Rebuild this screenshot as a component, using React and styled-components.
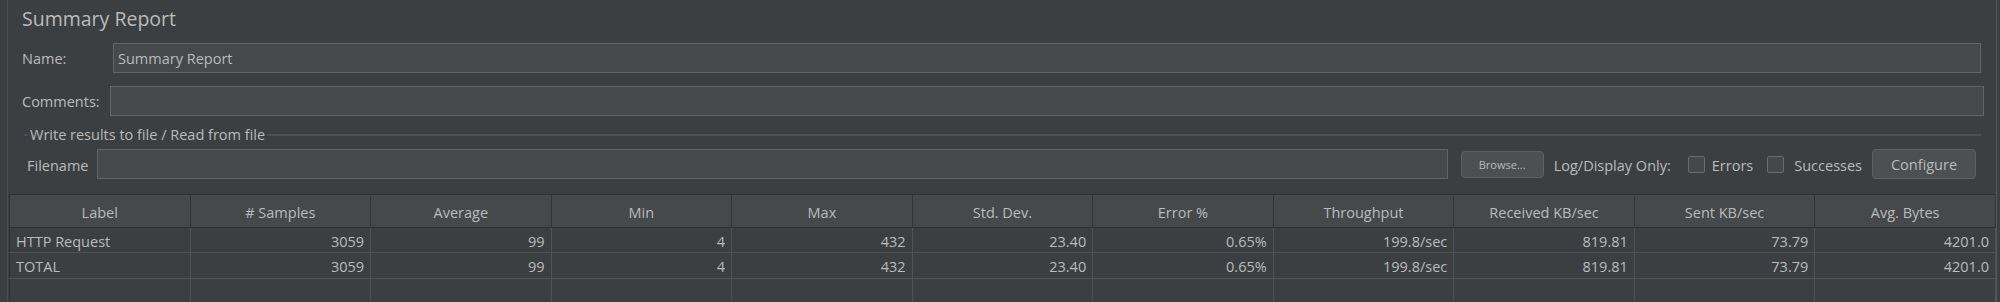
import React from "react";
import styled, { createGlobalStyle } from "styled-components";

const GlobalStyle = createGlobalStyle`
  html, body {
    margin: 0;
    padding: 0;
    background: #3c3f41;
    overflow: hidden;
  }
  body {
    font-family: "Open Sans", "Noto Sans", sans-serif;
    color: #bbbbbb;
  }
  * {
    box-sizing: border-box;
  }
`;

const Frame = styled.div`
  width: 2000px;
  height: 302px;
  display: flex;
  padding: 0 3px 0 7px;
  background: #3c3f41;
`;

const Panel = styled.div`
  flex: 1;
  height: 100%;
  display: flex;
  flex-direction: column;
  border-left: 1px solid #4b4e50;
  border-right: 1px solid #56595b;
  overflow: hidden;
`;

const Title = styled.h1`
  margin: 5px 0 0 14px;
  font-size: 19.5px;
  font-weight: 400;
  line-height: 27px;
  color: #bbbbbb;
`;

const FieldRow = styled.div`
  display: flex;
  align-items: center;
  height: 30px;
  margin-top: ${(props) => props.$top}px;
  padding-left: ${(props) => props.$left}px;
  padding-right: ${(props) => props.$right}px;
`;

const Label = styled.label`
  flex: none;
  width: ${(props) => props.$width}px;
  padding-top: ${(props) => props.$drop || 0}px;
  font-size: 14.5px;
  white-space: nowrap;
`;

const TextField = styled.div`
  flex: 1;
  height: 30px;
  display: flex;
  align-items: center;
  padding: 0 4px;
  background: #45494a;
  border: 1px solid #646464;
  font-size: 14.5px;
  color: #bbbbbb;
`;

const Legend = styled.div`
  display: flex;
  align-items: center;
  height: 20px;
  margin: 9px 15px 0 16px;
  gap: 2px;
  font-size: 14.5px;
  white-space: nowrap;

  &::before {
    content: "";
    width: 4px;
    border-top: 2px solid #4e5153;
  }
  &::after {
    content: "";
    flex: 1;
    border-top: 2px solid #4e5153;
  }
`;

const Button = styled.button`
  flex: none;
  height: ${(props) => (props.$small ? 27 : 30)}px;
  width: ${(props) => props.$width}px;
  margin-left: ${(props) => props.$gap}px;
  padding: 1px 0 0;
  background: #4c5052;
  border: 1px solid #5e6060;
  border-radius: 4px;
  color: #bbbbbb;
  font-family: inherit;
  font-size: ${(props) => (props.$small ? 11 : 14.5)}px;
`;

const Inline = styled.span`
  flex: none;
  margin-left: ${(props) => props.$gap}px;
  padding-top: 2px;
  font-size: 14.5px;
  white-space: nowrap;
`;

const Check = styled.span`
  flex: none;
  width: 17px;
  height: 17px;
  margin-left: ${(props) => props.$gap}px;
  background: #43494a;
  border: 1px solid #6b6b6b;
  border-radius: 2px;
`;

const Table = styled.table`
  margin: 15px 0 0 1px;
  width: 1987px;
  border-collapse: collapse;
  table-layout: fixed;
  font-size: 14.5px;
`;

const Th = styled.th`
  height: 33px;
  padding: 2px 0 0;
  font-weight: 400;
  text-align: center;
  background: #45494a;
  border-top: 1px solid #2f3133;
  border-right: 1px solid #323537;
  border-bottom: 1px solid #2f3133;
  &:first-child {
    border-left: 1px solid #2f3133;
  }
`;

const Td = styled.td`
  height: ${(props) => props.$h || 25}px;
  padding: 2px 6px 0 6px;
  text-align: ${(props) => (props.$left ? "left" : "right")};
  white-space: nowrap;
  background: #3c3f41;
  border-right: 1px solid #4f5355;
  border-bottom: 1px solid #4f5355;
  &:first-child {
    border-left: 1px solid #2f3133;
  }
`;

const columns = [
  "Label",
  "# Samples",
  "Average",
  "Min",
  "Max",
  "Std. Dev.",
  "Error %",
  "Throughput",
  "Received KB/sec",
  "Sent KB/sec",
  "Avg. Bytes",
];

const rows = [
  ["HTTP Request", "3059", "99", "4", "432", "23.40", "0.65%", "199.8/sec", "819.81", "73.79", "4201.0"],
  ["TOTAL", "3059", "99", "4", "432", "23.40", "0.65%", "199.8/sec", "819.81", "73.79", "4201.0"],
];

export default function App() {
  return (
    <>
      <GlobalStyle />
      <Frame>
        <Panel>
          <Title>Summary Report</Title>
          <FieldRow $top={11} $left={14} $right={15}>
            <Label $width={91}>Name:</Label>
            <TextField>Summary Report</TextField>
          </FieldRow>
          <FieldRow $top={13} $left={14} $right={12}>
            <Label $width={88} $drop={1}>
              Comments:
            </Label>
            <TextField />
          </FieldRow>
          <Legend>Write results to file / Read from file</Legend>
          <FieldRow $top={5} $left={19} $right={20}>
            <Label $width={70} $drop={2}>
              Filename
            </Label>
            <TextField />
            <Button $small $width={83} $gap={13}>
              Browse...
            </Button>
            <Inline $gap={10}>Log/Display Only:</Inline>
            <Check $gap={17} />
            <Inline $gap={7}>Errors</Inline>
            <Check $gap={14} />
            <Inline $gap={10}>Successes</Inline>
            <Button $width={104} $gap={10}>
              Configure
            </Button>
          </FieldRow>
          <Table>
            <thead>
              <tr>
                {columns.map((c) => (
                  <Th key={c}>{c}</Th>
                ))}
              </tr>
            </thead>
            <tbody>
              {rows.map((r, i) => (
                <tr key={i}>
                  {r.map((v, j) => (
                    <Td key={j} $left={j === 0} $h={i === 0 ? 25 : 26}>
                      {v}
                    </Td>
                  ))}
                </tr>
              ))}
              <tr>
                {columns.map((c) => (
                  <Td key={c} $h={30} />
                ))}
              </tr>
            </tbody>
          </Table>
        </Panel>
      </Frame>
    </>
  );
}
